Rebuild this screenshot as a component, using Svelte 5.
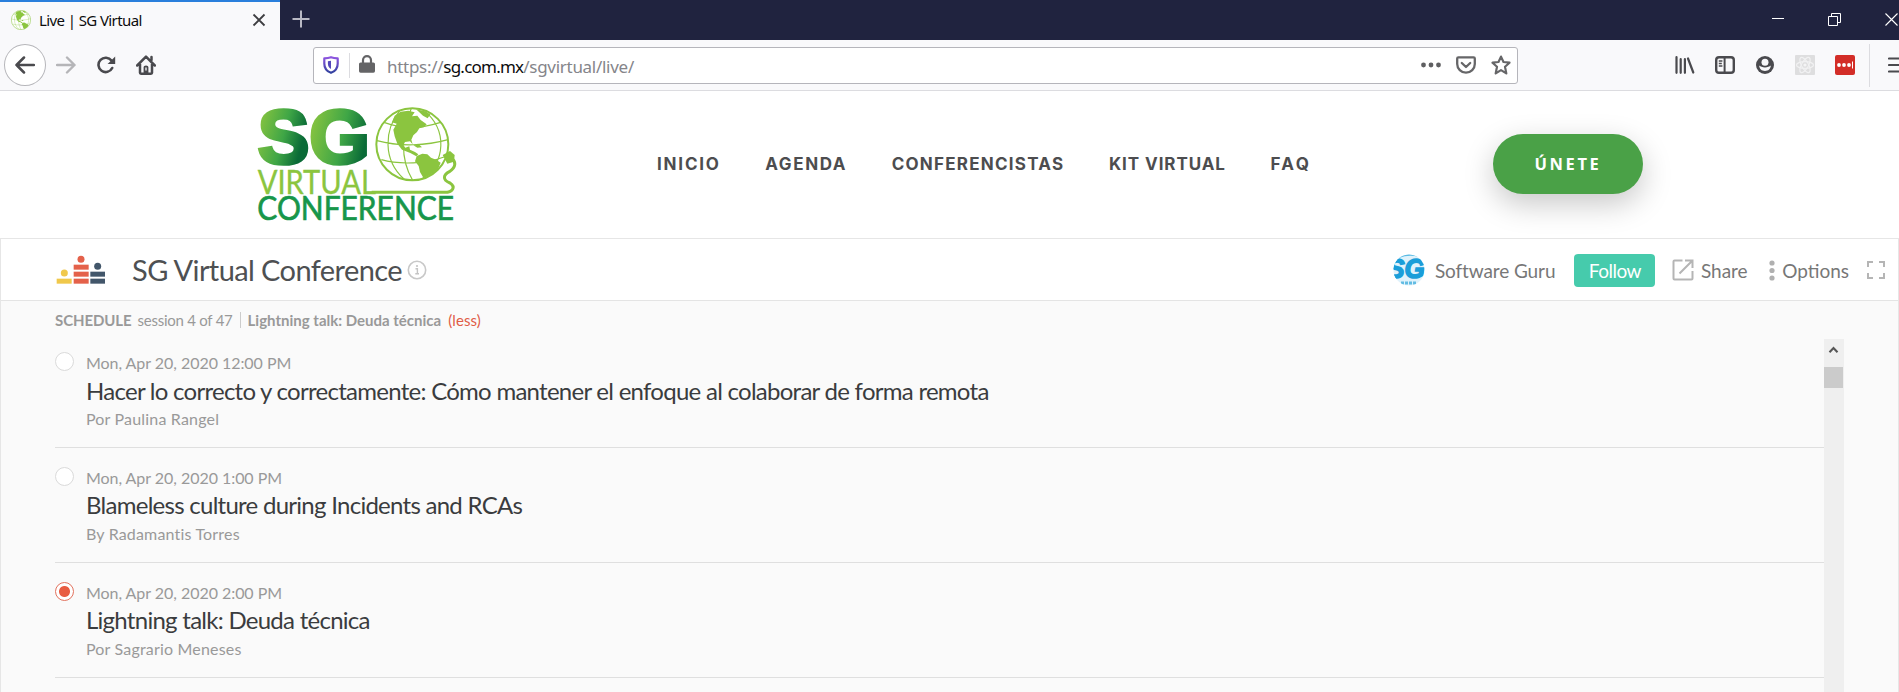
<script>
  const nav = ['INICIO', 'AGENDA', 'CONFERENCISTAS', 'KIT VIRTUAL', 'FAQ'];
  const sessions = [
    { date: 'Mon, Apr 20, 2020 12:00 PM', title: 'Hacer lo correcto y correctamente: Cómo mantener el enfoque al colaborar de forma remota', by: 'Por Paulina Rangel', active: false },
    { date: 'Mon, Apr 20, 2020 1:00 PM', title: 'Blameless culture during Incidents and RCAs', by: 'By Radamantis Torres', active: false },
    { date: 'Mon, Apr 20, 2020 2:00 PM', title: 'Lightning talk: Deuda técnica', by: 'Por Sagrario Meneses', active: true }
  ];
</script>

{#snippet globe()}
  <circle cx="517" cy="148" r="108" fill="#fff" stroke="#8bc53f" stroke-width="6" />
  <g fill="none" stroke="#8bc53f" stroke-width="3.5">
    <path d="M480 46C432 104 428 194 492 252M552 46C624 106 616 202 548 250M432 82C490 104 552 98 602 82M411 137C480 156 560 152 624 134M424 194C480 210 560 206 612 186M514 40C486 110 478 190 518 256" />
  </g>
  <g fill="#8bc53f">
    <path d="M464 62L482 50L505 47L524 52L516 64L532 62L542 75L560 88L552 97L538 100L531 111L520 121L514 134L518 148L510 139L495 141L489 150L496 158L508 154L510 164L525 171L535 178L529 184L511 174L486 164L472 146L464 124L460 104L470 86L456 82Z" />
    <path d="M530 183L547 176L562 178L573 188L590 195L602 203L594 222L580 234L564 243L551 250L540 231L536 213L525 199Z" />
    <path d="M528 43L552 48L571 58L563 70L549 62L538 52ZM520 151L538 149L546 157L532 158Z" />
  </g>
{/snippet}

<div class="browser">
  <div class="tabs">
    <div class="tab">
      <svg class="fav" width="20" height="20" viewBox="405 36 224 224">{@render globe()}</svg>
      <span class="tabname">Live | SG Virtual</span>
      <svg width="14" height="14" viewBox="0 0 14 14"><path d="M1.5 1.5L12.5 12.5M12.5 1.5L1.5 12.5" stroke="#3d3d40" stroke-width="1.8" /></svg>
    </div>
    <svg class="plus" width="18" height="18" viewBox="0 0 18 18"><path d="M9 0.5V17.5M0.5 9H17.5" stroke="#b9b9c4" stroke-width="2" /></svg>
    <div class="window">
      <svg width="12" height="12" viewBox="0 0 12 12"><path d="M0 5.5H12" stroke="#fff" /></svg>
      <svg width="13" height="13" viewBox="0 0 13 13" fill="none" stroke="#fff"><path d="M.5 3.5H9.5V12.5H.5ZM3.5 3.5V.5H12.5V9.5H9.5" /></svg>
      <svg width="13" height="13" viewBox="0 0 13 13"><path d="M.5 .5L12.5 12.5M12.5 .5L.5 12.5" stroke="#fff" stroke-width="1.1" /></svg>
    </div>
  </div>

  <div class="toolbar">
    <div class="back"><svg width="20" height="18" viewBox="0 0 20 18" fill="none" stroke="#4a4a4e" stroke-width="2.5" stroke-linecap="round" stroke-linejoin="round"><path d="M19 9H1.5M9 1.5L1.5 9L9 16.5" /></svg></div>
    <svg class="fwd" width="20" height="18" viewBox="0 0 20 18" fill="none" stroke="#b5b5b8" stroke-width="2.4" stroke-linecap="round" stroke-linejoin="round"><path d="M1 9H18.5M11 1.5L18.5 9L11 16.5" /></svg>
    <svg class="reload" width="20" height="18" viewBox="0 0 20 18"><path d="M15.5 4.6A7.2 7.2 0 1 0 16.2 12" fill="none" stroke="#4a4a4e" stroke-width="2.6" stroke-linecap="round" /><path d="M19.2 .5V8H11.6Z" fill="#4a4a4e" /></svg>
    <svg class="home" width="20" height="20" viewBox="0 0 20 20" fill="none" stroke="#4a4a4e" stroke-width="2.5" stroke-linejoin="round" stroke-linecap="round"><path d="M1.2 10.5L10 1.6L18.8 10.5M4 9V17.8Q4 18.7 5 18.7H15Q16 18.7 16 17.8V9M15.5 2V5" /><path d="M7.6 18V12Q7.6 10.5 10 10.5T12.4 12V18Z" fill="#4a4a4e" stroke="none" /><path d="M10 13V15" stroke="#f9f9fb" stroke-width="1.3" /></svg>
    <div class="urlbox">
      <svg width="16" height="18" viewBox="0 0 16 18">
        <defs><linearGradient id="shield" x1="0" y1="0" x2="0" y2="1"><stop offset="0" stop-color="#8e55e0" /><stop offset="1" stop-color="#31419e" /></linearGradient></defs>
        <path d="M8 1.2C10.2 2 12.5 2.3 14.7 2.4V7.5C14.7 12.5 12 15.4 8 16.8C4 15.4 1.3 12.5 1.3 7.5V2.4C3.5 2.3 5.8 2 8 1.2Z" fill="none" stroke="url(#shield)" stroke-width="2.2" stroke-linejoin="round" /><path d="M8 4.8V12.9C5.9 11.7 4.9 10.2 4.9 7.5V5.3Z" fill="#5247ba" />
      </svg>
      <i class="bar"></i>
      <svg class="lock" width="16" height="18" viewBox="0 0 16 18"><rect y="7.5" width="16" height="10.2" rx="1.6" fill="#646466" /><path d="M4 8.5V5.2A4 4 0 0 1 12 5.2V8.5" fill="none" stroke="#646466" stroke-width="2.2" /></svg>
      <span class="url">https://<b>sg.com.mx</b>/sgvirtual/live/</span>
      <svg width="20" height="6" viewBox="0 0 20 6" fill="#5f5f61"><circle cx="2.5" cy="3" r="2.4" /><circle cx="10" cy="3" r="2.4" /><circle cx="17.5" cy="3" r="2.4" /></svg>
      <svg class="pocket" width="20" height="18" viewBox="0 0 20 18" fill="none" stroke="#666668" stroke-width="2.3" stroke-linejoin="round" stroke-linecap="round"><path d="M2.4 1.3H17.6Q18.8 1.3 18.8 2.5V8A8.8 8.6 0 0 1 1.2 8V2.5Q1.2 1.3 2.4 1.3ZM5.8 7L10 11L14.2 7" /></svg>
      <svg class="star" width="20" height="20" viewBox="0 0 20 20" fill="none" stroke="#666668" stroke-width="2.2" stroke-linejoin="round"><path d="M10 1.6L12.5 7L18.5 7.7L14 11.8L15.3 18.4L10 15.1L4.7 18.4L6 11.8L1.5 7.7L7.5 7Z" /></svg>
    </div>
    <div class="tools">
      <svg width="20" height="18" viewBox="0 0 20 18" fill="none" stroke="#4a4a4e" stroke-width="2.2" stroke-linecap="round"><path d="M1.5 1.2V16.8M5.7 3.2V16.8M9.9 3.2V16.8M13 2.5L18.3 16.5" /></svg>
      <svg width="20" height="18" viewBox="0 0 20 18" fill="none" stroke="#4a4a4e"><rect x="1.2" y="1.2" width="17.6" height="15.6" rx="2.8" stroke-width="2.4" /><path d="M9.6 1V17" stroke-width="2" /><path d="M3.8 5H7.4M3.8 7.5H6.8M3.8 10H7.4" stroke-width="1.3" /></svg>
      <svg width="20" height="18" viewBox="0 0 20 18"><circle cx="10" cy="9" r="9" fill="#4a4a4e" /><circle cx="10" cy="6.3" r="3.5" fill="#f9f9fb" /><path d="M4.2 9.6C6.5 12 13.5 12 15.8 9.6C15.6 13.2 13.3 15 10 15S4.4 13.2 4.2 9.6Z" fill="#f9f9fb" /></svg>
      <svg width="20" height="20" viewBox="0 0 20 20"><rect width="20" height="20" rx="1" fill="#dededf" /><g fill="none" stroke="#f1f1f2" stroke-width="1.2"><ellipse cx="10" cy="10" rx="8.5" ry="3.4" /><ellipse cx="10" cy="10" rx="8.5" ry="3.4" transform="rotate(60 10 10)" /><ellipse cx="10" cy="10" rx="8.5" ry="3.4" transform="rotate(120 10 10)" /></g><circle cx="10" cy="10" r="1.6" fill="#f4f4f5" /></svg>
      <svg width="20" height="20" viewBox="0 0 20 20"><rect width="20" height="20" rx="2" fill="#d32d27" /><g fill="#fff"><circle cx="4" cy="10" r="1.9" /><circle cx="9" cy="10" r="1.9" /><circle cx="14" cy="10" r="1.9" /><rect x="17" y="6.5" width="1" height="7" /></g></svg>
    </div>
    <i class="sep"></i>
    <svg class="menu" width="11" height="16" viewBox="0 0 11 16"><path d="M1 1.5H12M1 8H12M1 14.5H12" stroke="#4a4a4e" stroke-width="2.2" stroke-linecap="round" /></svg>
  </div>
</div>

<header>
  <svg class="logo" width="230" height="135" viewBox="0 0 690 405">
    <defs>
      <linearGradient id="s" gradientUnits="userSpaceOnUse" x1="70" y1="0" x2="215" y2="40"><stop offset="0" stop-color="#8cc63f" /><stop offset=".6" stop-color="#3fa646" /><stop offset="1" stop-color="#0a6b37" /></linearGradient>
      <linearGradient id="g" gradientUnits="userSpaceOnUse" x1="225" y1="0" x2="400" y2="40"><stop offset="0" stop-color="#8cc63f" /><stop offset=".6" stop-color="#3fa646" /><stop offset="1" stop-color="#0a6b37" /></linearGradient>
    </defs>
    <g font-family="Liberation Sans, sans-serif" font-weight="700" font-size="229" stroke-width="11">
      <text x="53" y="204" textLength="155" lengthAdjust="spacingAndGlyphs" fill="url(#s)" stroke="url(#s)">S</text>
      <text x="208" y="204" textLength="182" lengthAdjust="spacingAndGlyphs" fill="url(#g)" stroke="url(#g)">G</text>
    </g>
    <text x="53" y="296" font-family="Lato, sans-serif" font-size="98" textLength="355" lengthAdjust="spacingAndGlyphs" fill="#8bc53f" stroke="#8bc53f" stroke-width="1">VIRTUAL</text>
    {@render globe()}
    <path d="M395 292H614C638 292 648 276 630 264C606 254 610 240 628 230C650 216 646 200 638 192L622 186" fill="none" stroke="#8bc53f" stroke-width="9" />
    <path d="M608 180L630 168L644 180L642 200L622 206Z" fill="#8bc53f" />
    <text x="52" y="376" font-family="Lato, sans-serif" font-size="96" font-weight="400" textLength="590" lengthAdjust="spacingAndGlyphs" fill="#17964a" stroke="#17964a" stroke-width="2">CONFERENCE</text>
  </svg>
  <nav>{#each nav as n}<span>{n}</span>{/each}</nav>
  <button class="join">ÚNETE</button>
</header>

<main>
  <div class="head">
    <svg width="50" height="30" viewBox="168 75 150 90">
      <g fill="#f0c84b"><rect x="170" y="146" width="45" height="15" /><circle cx="193" cy="129" r="10.5" /></g>
      <g fill="#e4614a"><rect x="221" y="104" width="45" height="15" /><rect x="221" y="125" width="45" height="15" /><rect x="221" y="146" width="45" height="15" /><circle cx="243" cy="88" r="10.5" /></g>
      <g fill="#42566a"><rect x="271" y="125" width="44" height="15" /><rect x="271" y="146" width="44" height="15" /><circle cx="293" cy="109" r="10.5" /></g>
    </svg>
    <h1>SG Virtual Conference</h1>
    <svg class="info" width="20" height="20" viewBox="0 0 20 20"><circle cx="10" cy="10" r="8.7" fill="none" stroke="#c8c8c8" stroke-width="1.6" /><path d="M8.5 8.7H10.4V13.5M8.3 13.8H12" fill="none" stroke="#c4c4c4" stroke-width="1.4" /><circle cx="10" cy="6" r="1.1" fill="#c4c4c4" /></svg>
    <div class="actions">
      <svg width="32" height="32" viewBox="0 0 32 32">
        <defs><clipPath id="av"><circle cx="16" cy="16" r="15.5" /></clipPath></defs>
        <g clip-path="url(#av)"><rect width="32" height="32" fill="#dff2fb" /><path d="M6 0H26V3Q16 0 6 4Z" fill="#5bbbe4" />
          <text x="-6" y="24" font-family="Liberation Sans, sans-serif" font-size="28" font-weight="700" font-style="italic" textLength="38" lengthAdjust="spacingAndGlyphs" fill="#1a9ed9" stroke="#1a9ed9" stroke-width="1.6">SG</text>
          <path d="M8 29H24" stroke="#62bce3" stroke-width="3" stroke-dasharray="3 1" /></g>
      </svg>
      <span class="guru">Software Guru</span>
      <button class="follow">Follow</button>
      <svg class="shareicon" width="22" height="22" viewBox="0 0 22 22" fill="none" stroke="#b5b5b5" stroke-width="2"><path d="M10.5 1.5H2.5Q1.5 1.5 1.5 2.5V19.5Q1.5 20.5 2.5 20.5H19.5Q20.5 20.5 20.5 19.5V12M13 1.5H20.5V9M20 2L7.5 14.5" /></svg>
      <span class="share">Share</span>
      <svg class="dots" width="6" height="21" viewBox="0 0 6 21" fill="#b0b0b0"><circle cx="3" cy="3" r="2.6" /><circle cx="3" cy="10.5" r="2.6" /><circle cx="3" cy="18" r="2.6" /></svg>
      <span class="opts">Options</span>
      <svg class="full" width="18" height="18" viewBox="0 0 18 18" fill="none" stroke="#b5b5b5" stroke-width="2"><path d="M1 6V1H6M12 1H17V6M17 12V17H12M6 17H1V12" /></svg>
    </div>
  </div>

  <div class="crumbs">
    <b class="sch">SCHEDULE</b><span class="ses">session 4 of 47</span><i></i><b>Lightning talk: Deuda técnica</b><span class="less">(less)</span>
  </div>

  <div class="scroll">
    <div class="list">
      {#each sessions as s}
        <article>
          <span class="radio" class:on={s.active}></span>
          <div>
            <p class="meta">{s.date}</p>
            <h2>{s.title}</h2>
            <p class="meta by">{s.by}</p>
          </div>
        </article>
      {/each}
    </div>
    <div class="track">
      <svg width="20" height="28" viewBox="0 0 20 28"><path d="M5.5 13.2L9.5 9L13.5 13.2" fill="none" stroke="#555" stroke-width="2.1" /></svg>
      <div class="thumb"></div>
    </div>
  </div>
</main>

<style>
  :global(body) { margin: 0; background: #fff; overflow: hidden; }
  :global(#app) { height: 692px; overflow: hidden; display: flex; flex-direction: column; }
  svg { display: block; flex: none; }
  p, h1, h2 { margin: 0; font-weight: 400; }
  button { border: 0; padding: 0; }
  .tabs { height: 40px; background: #20233f; display: flex; align-items: center; }
  .tab { width: 280px; height: 40px; box-sizing: border-box; border-top: 2px solid #2a7fdc; background: #f9f9fb; display: flex; align-items: center; padding: 0 14px 2px 11px; }
  .tabname { flex: 1; margin-left: 8px; font: 15px/20px "Noto Sans", sans-serif; letter-spacing: -0.6px; color: #0c0c0d; }
  .plus { margin-left: 12px; margin-bottom: 2px; }
  .window { margin-left: auto; display: flex; align-items: center; gap: 44px; padding-right: 1px; margin-bottom: 2px; }
  .toolbar { height: 51px; box-sizing: border-box; background: #f9f9fb; border-bottom: 1px solid #dcdce0; display: flex; align-items: center; }
  .back { width: 42px; height: 42px; box-sizing: border-box; border: 1px solid #b6b6ba; border-radius: 50%; margin-left: 4px; background: #fff; display: flex; align-items: center; justify-content: center; }
  .fwd { margin-left: 10px; }
  .reload { margin-left: 20px; }
  .home { margin-left: 20px; }
  .urlbox { width: 1206px; height: 37px; box-sizing: border-box; margin-left: 157px; background: #fff; border: 1px solid #b5b5bb; border-radius: 3px; display: flex; align-items: center; padding: 0 6px 0 9px; }
  .bar { width: 1px; height: 25px; background: #dcdce0; margin: 0 9px 0 10px; }
  .lock { margin-bottom: 2px; }
  .url { flex: 1; margin: 3px 0 0 12px; font: 17px/24px "Noto Sans", sans-serif; letter-spacing: -0.28px; color: #85858a; }
  .url b { font-weight: 400; letter-spacing: -0.78px; color: #0c0c0d; }
  .pocket { margin-left: 15px; }
  .star { margin-left: 15px; }
  .tools { margin-left: 157px; display: flex; align-items: center; gap: 20px; }
  .sep { width: 1px; height: 43px; background: #dcdce0; margin-left: 14px; }
  .menu { margin-left: 18px; }
  header { height: 147px; box-sizing: border-box; padding-bottom: 1px; display: flex; align-items: center; flex: none; }
  .logo { margin: 0 0 3px 240px; }
  nav { display: flex; gap: 44.5px; margin-left: 187px; font: 700 17px/24px Inter, sans-serif; color: #4d4d4f; letter-spacing: 1.8px; }
  nav span:nth-child(2) { letter-spacing: 1.6px; }
  nav span:nth-child(3) { letter-spacing: 1.25px; }
  nav span:nth-child(4) { letter-spacing: 0.93px; }
  nav span:nth-child(5) { letter-spacing: 2.4px; }
  .join { margin-left: auto; margin-right: 256px; width: 150px; height: 60px; border-radius: 30px; background: #4aa147; color: #fff; font: 700 16.5px/24px "Open Sans", sans-serif; letter-spacing: 2.6px; box-shadow: 0 10px 30px rgba(0,0,0,.22); }
  main { flex: 1; min-height: 0; border: 1px solid #e6e6e6; border-bottom: 0; background: #fafafa; font-family: Lato, sans-serif; display: flex; flex-direction: column; }
  .head { height: 60px; flex: none; background: #fff; border-bottom: 1px solid #e4e4e4; display: flex; align-items: center; padding: 1px 13px 0 55px; }
  h1 { font-size: 29px; line-height: 36px; letter-spacing: -0.6px; margin-left: 26px; color: #4e5052; }
  .info { margin-left: 5px; }
  .actions { margin-left: auto; display: flex; align-items: center; font-size: 19px; line-height: 24px; color: #777; }
  .actions span { padding-top: 1px; }
  .guru { margin-left: 9.5px; letter-spacing: -0.1px; }
  .follow { margin-left: 19px; width: 81px; height: 33px; padding-top: 1px; border-radius: 4px; background: #46cbac; color: #fff; font: 19px/24px Lato, sans-serif; letter-spacing: -0.5px; }
  .shareicon { margin-left: 17px; }
  .share { margin-left: 6.5px; }
  .dots { margin-left: 21.5px; }
  .opts { margin-left: 7px; }
  .full { margin-left: 18px; }
  .crumbs { height: 38px; flex: none; display: flex; align-items: center; padding-left: 54px; font-size: 15px; line-height: 20px; color: #999; }
  .crumbs i { width: 1px; height: 16px; background: #ccc; margin: 0 7px; }
  .sch { letter-spacing: -0.1px; }
  .ses { margin-left: 6px; letter-spacing: -0.25px; }
  .less { margin-left: 7px; letter-spacing: 0.1px; color: #e05c46; }
  .scroll { flex: 1; min-height: 0; display: flex; margin: 0 54px 0 54px; }
  .list { flex: 1; overflow: hidden; }
  article { height: 115px; box-sizing: border-box; border-bottom: 1px solid #dfdfdf; display: flex; gap: 12px; padding-top: 20px; }
  article:first-child { height: 109px; padding-top: 14px; }
  article + article h2 { margin: 3px 0 5px; }
  .radio { width: 19px; height: 19px; box-sizing: border-box; border: 1px solid #dadada; border-radius: 50%; background: #fff; margin-top: -1px; flex: none; }
  .radio.on { border-color: #e2725e; background: radial-gradient(circle, #e85c41 5px, #fff 6px); }
  .meta { font-size: 16px; line-height: 20px; letter-spacing: -0.04px; color: #999; }
  .by { letter-spacing: 0.18px; }
  h2 { font-size: 24px; line-height: 28px; letter-spacing: -0.73px; margin: 4px 0; color: #3a3c3e; }
  .track { width: 20px; background: #efefef; }
  .thumb { width: 19px; height: 21px; background: #cbcbcb; }
</style>
